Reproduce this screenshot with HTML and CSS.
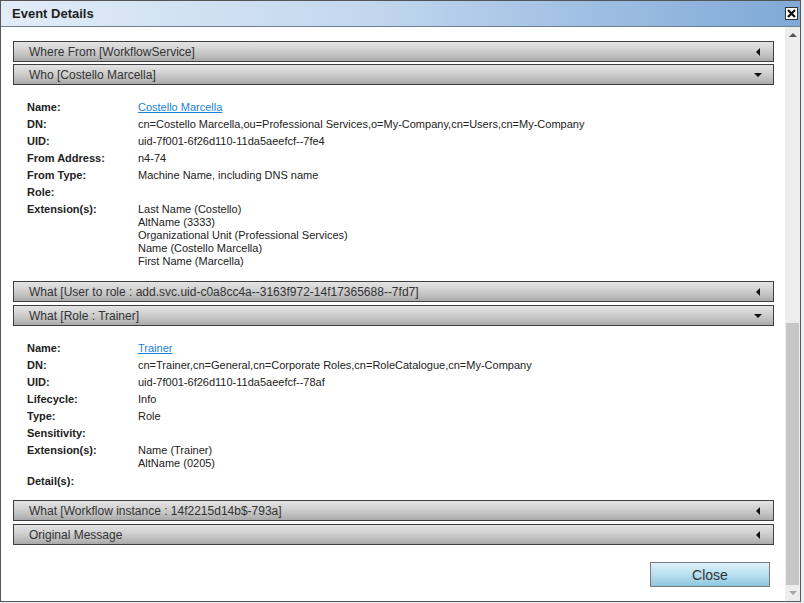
FILE: index.html
```html
<!DOCTYPE html>
<html>
<head>
<meta charset="utf-8">
<link rel="stylesheet" href="styles.css">
</head>
<body>
<div class="dialog">
  <div class="titlebar">
    <span class="title">Event Details</span>
    <span class="xbtn"><svg width="11" height="11" viewBox="0 0 11 11"><path d="M2 2 L9 9 M9 2 L2 9" stroke="#111" stroke-width="2.2" fill="none"/></svg></span>
  </div>
  <div class="main">
    <div class="content">
      <div class="acc"><span>Where From [WorkflowService]</span><i class="arr-left"></i></div>
      <div class="acc"><span>Who [Costello Marcella]</span><i class="arr-down"></i></div>
      <div class="details">
        <div class="lbl">Name:</div><div class="val"><a href="#">Costello Marcella</a></div>
        <div class="lbl">DN:</div><div class="val">cn=Costello Marcella,ou=Professional Services,o=My-Company,cn=Users,cn=My-Company</div>
        <div class="lbl">UID:</div><div class="val">uid-7f001-6f26d110-11da5aeefcf--7fe4</div>
        <div class="lbl">From Address:</div><div class="val">n4-74</div>
        <div class="lbl">From Type:</div><div class="val">Machine Name, including DNS name</div>
        <div class="lbl">Role:</div><div class="val"></div>
        <div class="lbl">Extension(s):</div>
        <div class="val list">
          <div>Last Name (Costello)</div>
          <div>AltName (3333)</div>
          <div>Organizational Unit (Professional Services)</div>
          <div>Name (Costello Marcella)</div>
          <div>First Name (Marcella)</div>
        </div>
      </div>
      <div class="acc"><span>What [User to role : add.svc.uid-c0a8cc4a--3163f972-14f17365688--7fd7]</span><i class="arr-left"></i></div>
      <div class="acc"><span>What [Role : Trainer]</span><i class="arr-down"></i></div>
      <div class="details">
        <div class="lbl">Name:</div><div class="val"><a href="#">Trainer</a></div>
        <div class="lbl">DN:</div><div class="val">cn=Trainer,cn=General,cn=Corporate Roles,cn=RoleCatalogue,cn=My-Company</div>
        <div class="lbl">UID:</div><div class="val">uid-7f001-6f26d110-11da5aeefcf--78af</div>
        <div class="lbl">Lifecycle:</div><div class="val">Info</div>
        <div class="lbl">Type:</div><div class="val">Role</div>
        <div class="lbl">Sensitivity:</div><div class="val"></div>
        <div class="lbl">Extension(s):</div>
        <div class="val list">
          <div>Name (Trainer)</div>
          <div>AltName (0205)</div>
        </div>
        <div class="lbl">Detail(s):</div><div class="val"></div>
      </div>
      <div class="acc"><span>What [Workflow instance : 14f2215d14b$-793a]</span><i class="arr-left"></i></div>
      <div class="acc"><span>Original Message</span><i class="arr-left"></i></div>
      <div class="actions">
        <button class="close-btn">Close</button>
      </div>
    </div>
    <div class="scrollbar">
      <div class="sb-up"></div>
      <div class="sb-track"><div class="sb-thumb"></div></div>
      <div class="sb-down"></div>
    </div>
  </div>
</div>
</body>
</html>
```

FILE: styles.css
```css
html, body {
  margin: 0;
  padding: 0;
}
body {
  background: #eceef0;
  width: 804px;
  height: 603px;
  overflow: hidden;
  font-family: "Liberation Sans", Arial, sans-serif;
  color: #222;
}
.dialog {
  width: 801px;
  height: 602px;
  box-sizing: border-box;
  border: 1px solid #555;
  background: #fff;
  display: flex;
  flex-direction: column;
}
.titlebar {
  height: 25px;
  border-bottom: 1px solid #6d7f93;
  background: linear-gradient(to right, #e2ecf7 0%, #c3d8ee 45%, #9dbee3 75%, #7fa9d6 100%);
  display: flex;
  align-items: center;
  justify-content: space-between;
  padding: 0 2px 0 11px;
  flex: none;
}
.title {
  font-size: 13px;
  font-weight: bold;
  color: #1e1e1e;
}
.xbtn {
  width: 11px;
  height: 11px;
  border: 1px solid #333;
  background: #fdfdfd;
  display: flex;
  align-items: center;
  justify-content: center;
}
.main {
  flex: 1;
  display: flex;
  min-height: 0;
}
.content {
  flex: 1;
  padding: 14px 11px 0 12px;
  display: flex;
  flex-direction: column;
}
.acc {
  height: 21px;
  box-sizing: border-box;
  border: 1px solid #3f3f3f;
  background: linear-gradient(to bottom, #e4e4e4 0%, #d2d2d2 40%, #b9b9b9 80%, #a9a9a9 100%);
  display: flex;
  align-items: center;
  justify-content: space-between;
  padding: 0 12px 0 15px;
  margin-bottom: 2px;
  font-size: 12px;
  color: #333;
}
.arr-left {
  width: 0;
  height: 0;
  border-top: 4px solid transparent;
  border-bottom: 4px solid transparent;
  border-right: 4px solid #111;
  margin-right: 1px;
}
.arr-down {
  width: 0;
  height: 0;
  border-left: 4px solid transparent;
  border-right: 4px solid transparent;
  border-top: 4px solid #111;
  margin-right: -1px;
}
.details {
  display: grid;
  grid-template-columns: 111px 1fr;
  padding: 12px 0 10px 14px;
  font-size: 11px;
  line-height: 17px;
}
.lbl {
  font-weight: bold;
  color: #222;
}
.val {
  color: #222;
  min-height: 17px;
}
.val a {
  color: #1b7fd8;
  text-decoration: underline;
}
.val.list {
  line-height: 13px;
  padding: 2px 0 3px 0;
}
.acc + .acc + .acc + .acc + .acc + .acc,
.details + .acc + .acc {
  margin-top: 1px;
}
.actions {
  display: flex;
  justify-content: flex-end;
  padding: 15px 4px 0 0;
}
.close-btn {
  width: 120px;
  height: 25px;
  border: 1px solid #7a7a7a;
  background: linear-gradient(to bottom, #def1fa 0%, #b9dff0 50%, #8fc7e0 100%);
  font-family: "Liberation Sans", Arial, sans-serif;
  font-size: 14px;
  color: #333;
  padding: 0;
}
.scrollbar {
  width: 15px;
  flex: none;
  background: #ededed;
  display: flex;
  flex-direction: column;
}
.sb-up, .sb-down {
  height: 16px;
  display: flex;
  align-items: center;
  justify-content: center;
  flex: none;
}
.sb-up::before {
  content: "";
  border-left: 4px solid transparent;
  border-right: 4px solid transparent;
  border-bottom: 4px solid #555;
}
.sb-down::before {
  content: "";
  border-left: 4px solid transparent;
  border-right: 4px solid transparent;
  border-top: 4px solid #a8a8a8;
}
.sb-track {
  flex: 1;
  display: flex;
  flex-direction: column;
  justify-content: flex-end;
  padding: 0 1px;
}
.sb-thumb {
  height: 262px;
  background: #c6c6c6;
}
```
